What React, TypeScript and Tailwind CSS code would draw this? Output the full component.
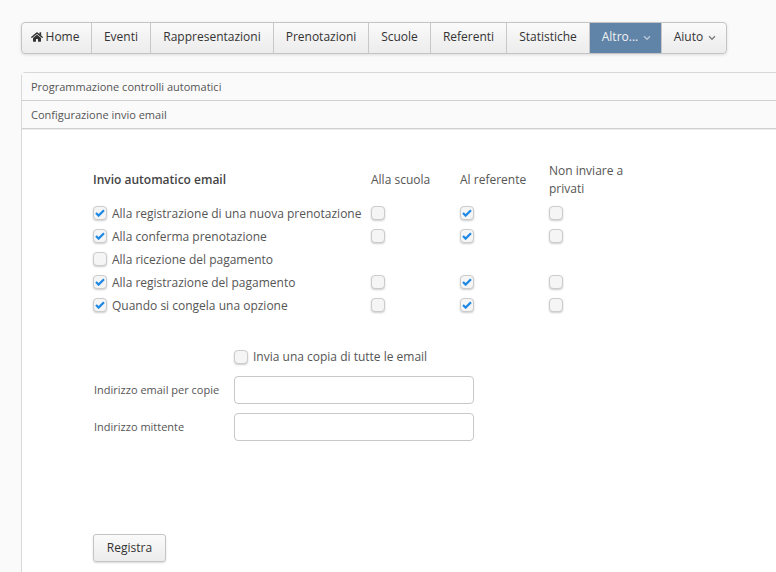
import { FaHome } from "react-icons/fa";

const nav = [
  { t: "Home", w: 70, icon: true },
  { t: "Eventi", w: 59 },
  { t: "Rappresentazioni", w: 123 },
  { t: "Prenotazioni", w: 95 },
  { t: "Scuole", w: 62 },
  { t: "Referenti", w: 76 },
  { t: "Statistiche", w: 83 },
  { t: "Altro...", w: 72, caret: true, active: true },
  { t: "Aiuto", w: 64, caret: true },
];

function Check({ on }: { on: boolean }) {
  return (
    <span className="flex h-[14px] w-[14px] shrink-0 items-center justify-center rounded-[4px] border border-[#cccccc] bg-[#f5f5f5] shadow-[0_1px_2px_rgba(0,0,0,0.2)]">
      {on && (
        <svg width="10" height="8" viewBox="0 0 10 8" fill="none">
          <path d="M1 4l2.6 2.6L9 1.2" stroke="#1e88e5" strokeWidth="2.2" />
        </svg>
      )}
    </span>
  );
}

const rows = [
  { t: "Alla registrazione di una nuova prenotazione", m: true, c: [false, true, false] },
  { t: "Alla conferma prenotazione", m: true, c: [false, true, false] },
  { t: "Alla ricezione del pagamento", m: false, c: null },
  { t: "Alla registrazione del pagamento", m: true, c: [false, true, false] },
  { t: "Quando si congela una opzione", m: true, c: [false, true, false] },
];

export default function App() {
  return (
    <div className="h-[572px] w-[776px] overflow-hidden bg-[#fafafa] pl-[21px] pt-[22px] font-['Open_Sans',sans-serif] text-[#444444]">
      <nav className="flex h-[32px] w-fit overflow-hidden rounded-[4px] border border-[#c4c4c4] bg-gradient-to-b from-[#fafafa] to-[#ececec] shadow-[0_1px_3px_rgba(0,0,0,0.12)]">
        {nav.map((n, i) => (
          <div
            key={n.t}
            style={{ width: n.w }}
            className={`flex items-center justify-center pb-[2px] text-[12px] ${i < nav.length - 1 ? "border-r border-[#c8c8c8]" : ""} ${n.active ? "bg-[#6083a8] text-[#f2f2f2]" : "text-[#333333]"} ${n.icon ? "pr-[3px]" : ""} ${n.active ? "pl-[2px]" : ""} ${n.t === "Aiuto" ? "pl-[2px]" : ""}`}
          >
            {n.icon && <FaHome className="mr-[3px] h-[12px] w-[12px] text-[#333333]" />}
            {n.t}
            {n.caret && (
              <svg
                width="8"
                height="6"
                viewBox="0 0 8 6"
                fill="none"
                className={`ml-[5px] mt-[2px] ${n.active ? "text-[#b4c6d8]" : "text-[#808080]"}`}
              >
                <path d="M1 1.2L4 4.2L7 1.2" stroke="currentColor" strokeWidth="1.5" />
              </svg>
            )}
          </div>
        ))}
      </nav>

      <div className="mt-[18px] h-[520px] w-[800px] rounded-tl-[4px] border border-[#d8d8d8] bg-white">
        <div className="flex h-[28px] items-center border-b border-[#cfcfcf] bg-[#fafafa] pl-[9px] pt-[1px] text-[11px] text-[#555555] shadow-[0_1px_0_#ececec]">
          Programmazione controlli automatici
        </div>
        <div className="flex h-[28px] items-center border-b border-[#cfcfcf] bg-[#fafafa] pl-[9px] pt-[1px] text-[11px] text-[#555555] shadow-[0_1px_0_#ececec]">
          Configurazione invio email
        </div>

        <div className="pl-[71px] pt-[31px] text-[12px] text-[#555555]">
          <div className="flex h-[40px] items-center">
            <div className="w-[278px] font-semibold text-[#444444]">Invio automatico email</div>
            <div className="w-[89px]">Alla scuola</div>
            <div className="w-[89px]">Al referente</div>
            <div className="w-[90px] leading-[18px]">Non inviare a privati</div>
          </div>
          <div className="mt-[1px]">
            {rows.map((r) => (
              <div key={r.t} className="flex h-[23px] items-center">
                <div className="flex w-[278px] items-center gap-[5px]">
                  <Check on={r.m} />
                  <span className="pt-[2px]">{r.t}</span>
                </div>
                {r.c?.map((v, i) => (
                  <div key={i} className="w-[89px]">
                    <Check on={v} />
                  </div>
                ))}
              </div>
            ))}
          </div>

          <div className="mt-[29px] flex h-[23px] items-center gap-[5px] pl-[141px]">
            <Check on={false} />
            Invia una copia di tutte le email
          </div>
          <div className="mt-[8px] flex h-[28px] items-center">
            <div className="w-[141px] pl-[1px] text-[11px]">Indirizzo email per copie</div>
            <input className="h-[28px] w-[240px] rounded-[4px] border border-[#c8c8c8] bg-white" />
          </div>
          <div className="mt-[9px] flex h-[28px] items-center">
            <div className="w-[141px] pl-[1px] text-[11px]">Indirizzo mittente</div>
            <input className="h-[28px] w-[240px] rounded-[4px] border border-[#c8c8c8] bg-white" />
          </div>
          <button className="mt-[93px] h-[28px] w-[73px] rounded-[3px] border border-[#c4c4c4] bg-gradient-to-b from-[#fafafa] to-[#ececec] text-[12px] text-[#333333] shadow-[0_1px_2px_rgba(0,0,0,0.15)]">
            Registra
          </button>
        </div>
      </div>
    </div>
  );
}
